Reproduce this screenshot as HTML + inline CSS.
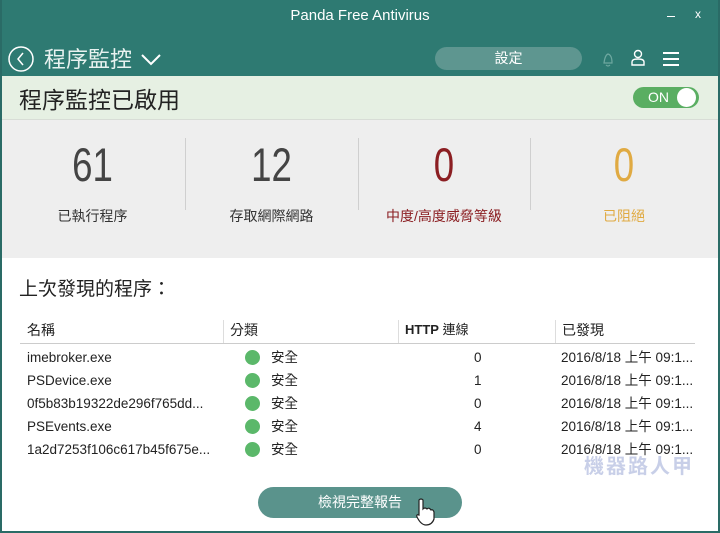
<!DOCTYPE html>
<html><head><meta charset="utf-8"><style>
*{margin:0;padding:0;box-sizing:border-box}
body{width:720px;height:533px;overflow:hidden;background:#fff;font-family:"Liberation Sans","Noto Sans CJK TC",sans-serif;position:relative}
.a{position:absolute;white-space:nowrap;line-height:1.2}
.r .a{line-height:18px;height:18px}
#frame{position:absolute;left:0;top:0;width:720px;height:533px;border:2px solid #2a6b66;border-top:none}
.n{font-size:47px;transform:scaleX(0.78);line-height:46px}
</style></head><body>
<div class="a" style="left:0;top:0;width:720px;height:76px;background:#2e7a72"></div>
<div class="a" style="left:0;top:7px;width:720px;text-align:center;color:#fff;font-size:15px">Panda Free Antivirus</div>
<div class="a" style="left:667px;top:16px;width:8px;height:1px;background:#fff"></div>
<div class="a" style="left:695px;top:7px;color:#fff;font-size:12px">x</div>
<svg class="a" style="left:7px;top:45px" width="28" height="28"><circle cx="14" cy="14" r="12" fill="none" stroke="#fff" stroke-width="1.5"/><path d="M16 8 L11 14 L16 20" fill="none" stroke="#fff" stroke-width="1.5"/></svg>
<div class="a" style="left:44px;top:46px;color:#e8f2f0;font-size:22px;line-height:28px">程序監控</div>
<svg class="a" style="left:140px;top:52px" width="22" height="14"><path d="M2 3 L11 12 L20 3" fill="none" stroke="#fff" stroke-width="2"/></svg>
<div class="a" style="left:435px;top:47px;width:147px;height:23px;border-radius:12px;background:#5e9690;color:#fff;font-size:14px;text-align:center;line-height:23px">設定</div>
<svg class="a" style="left:600px;top:50px" width="16" height="18"><path d="M4 13 Q5 5 8 4 Q12 5 12 13 Z M6 15 Q8 17 10 15" fill="none" stroke="#6ea8a0" stroke-width="1.2"/></svg>
<svg class="a" style="left:630px;top:49px" width="16" height="18"><circle cx="8" cy="5" r="3.5" fill="none" stroke="#fff" stroke-width="1.4"/><path d="M2 16 V13 Q2 10 8 10 Q14 10 14 13 V16 Z" fill="none" stroke="#fff" stroke-width="1.4"/></svg>
<svg class="a" style="left:663px;top:51px" width="17" height="16"><path d="M0 2H16M0 8H16M0 14H16" stroke="#fff" stroke-width="2"/></svg>
<div class="a" style="left:0;top:76px;width:720px;height:44px;background:#e6f0e3;border-bottom:1px solid #d8ddd6"></div>
<div class="a" style="left:19px;top:85px;font-size:23px;color:#222;line-height:30px">程序監控已啟用</div>
<div class="a" style="left:633px;top:87px;width:66px;height:21px;border-radius:11px;background:#5aae62"></div>
<div class="a" style="left:648px;top:87px;color:#fff;font-size:14px;line-height:21px">ON</div>
<div class="a" style="left:677px;top:88px;width:19px;height:19px;border-radius:50%;background:#fff"></div>
<div class="a" style="left:0;top:120px;width:720px;height:138px;background:#eeeeee"></div>
<div class="a" style="left:185px;top:138px;width:1px;height:72px;background:#cfcfcf"></div>
<div class="a" style="left:358px;top:138px;width:1px;height:72px;background:#cfcfcf"></div>
<div class="a" style="left:530px;top:138px;width:1px;height:72px;background:#cfcfcf"></div>
<div class="a n" style="left:0;top:142px;width:185px;text-align:center;color:#444">61</div>
<div class="a n" style="left:185px;top:142px;width:173px;text-align:center;color:#444">12</div>
<div class="a n" style="left:358px;top:142px;width:172px;text-align:center;color:#8b1e22">0</div>
<div class="a n" style="left:530px;top:142px;width:188px;text-align:center;color:#e0aa42">0</div>
<div class="a" style="left:0;top:208px;width:185px;text-align:center;font-size:14px;color:#333">已執行程序</div>
<div class="a" style="left:185px;top:208px;width:173px;text-align:center;font-size:14px;color:#333">存取網際網路</div>
<div class="a" style="left:358px;top:208px;width:172px;text-align:center;font-size:14px;color:#8b1e22">中度/高度威脅等級</div>
<div class="a" style="left:530px;top:208px;width:188px;text-align:center;font-size:14px;color:#e0aa42">已阻絕</div>
<div class="a" style="left:19px;top:277px;font-size:19px;color:#222;line-height:26px">上次發現的程序：</div>
<div class="a" style="left:20px;top:343px;width:675px;height:1px;background:#ccc"></div>
<div class="a" style="left:223px;top:320px;width:1px;height:23px;background:#ddd"></div>
<div class="a" style="left:398px;top:320px;width:1px;height:23px;background:#ddd"></div>
<div class="a" style="left:555px;top:320px;width:1px;height:23px;background:#ddd"></div>
<div class="r" style="position:absolute;left:0;top:321px;font-size:14px;color:#222">
<div class="a" style="left:27px;top:0">名稱</div>
<div class="a" style="left:230px;top:0">分類</div>
<div class="a" style="left:405px;top:0;font-size:13px"><b>HTTP</b> 連線</div>
<div class="a" style="left:562px;top:0">已發現</div>
</div>
<div class="r" style="position:absolute;left:0;top:349px;font-size:13.5px;color:#222">
<div class="a" style="left:27px;top:0">imebroker.exe</div>
<div class="a" style="left:27px;top:23px">PSDevice.exe</div>
<div class="a" style="left:27px;top:46px">0f5b83b19322de296f765dd...</div>
<div class="a" style="left:27px;top:69px">PSEvents.exe</div>
<div class="a" style="left:27px;top:92px">1a2d7253f106c617b45f675e...</div>
<div class="a" style="left:245px;top:1px;width:15px;height:15px;border-radius:50%;background:#5bb86a"></div><div class="a" style="left:271px;top:0">安全</div>
<div class="a" style="left:245px;top:24px;width:15px;height:15px;border-radius:50%;background:#5bb86a"></div><div class="a" style="left:271px;top:23px">安全</div>
<div class="a" style="left:245px;top:47px;width:15px;height:15px;border-radius:50%;background:#5bb86a"></div><div class="a" style="left:271px;top:46px">安全</div>
<div class="a" style="left:245px;top:70px;width:15px;height:15px;border-radius:50%;background:#5bb86a"></div><div class="a" style="left:271px;top:69px">安全</div>
<div class="a" style="left:245px;top:93px;width:15px;height:15px;border-radius:50%;background:#5bb86a"></div><div class="a" style="left:271px;top:92px">安全</div>
<div class="a" style="left:474px;top:0">0</div><div class="a" style="left:474px;top:23px">1</div><div class="a" style="left:474px;top:46px">0</div><div class="a" style="left:474px;top:69px">4</div><div class="a" style="left:474px;top:92px">0</div>
<div class="a" style="left:561px;top:0">2016/8/18 上午 09:1...</div>
<div class="a" style="left:561px;top:23px">2016/8/18 上午 09:1...</div>
<div class="a" style="left:561px;top:46px">2016/8/18 上午 09:1...</div>
<div class="a" style="left:561px;top:69px">2016/8/18 上午 09:1...</div>
<div class="a" style="left:561px;top:92px">2016/8/18 上午 09:1...</div>
</div>
<div class="a" style="left:584px;top:455px;font-size:20px;color:#c8cfe8;font-weight:bold;letter-spacing:2px">機器路人甲</div>
<div class="a" style="left:258px;top:487px;width:204px;height:31px;border-radius:16px;background:#5a938c;color:#fff;font-size:14px;text-align:center;line-height:31px">檢視完整報告</div>
<svg class="a" style="left:413px;top:497px" width="24" height="30"><path d="M6 3 Q8 1 10 3 V12 Q12 10 14 12 Q16 10 18 13 Q20 12 21 15 V22 Q19 28 13 28 Q8 28 4 20 Q3 17 6 18 V3 Z" fill="#fff" stroke="#222" stroke-width="1.2"/></svg>
<div id="frame"></div>
</body></html>
